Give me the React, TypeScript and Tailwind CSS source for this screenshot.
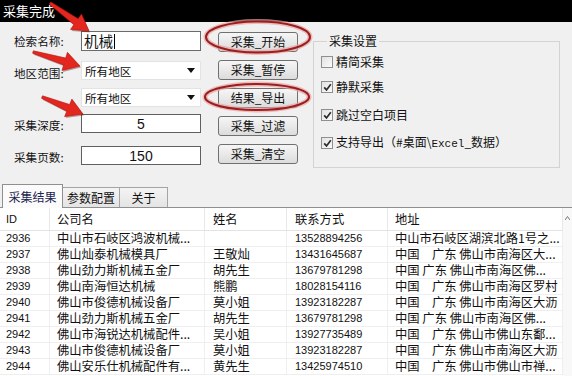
import React from "react";

function arrowPoints(x1: number, y1: number, x2: number, y2: number, tw = 1.3, sw = 3.6, hl = 16, hw = 9.5) {
  const dx = x2 - x1;
  const dy = y2 - y1;
  const L = Math.hypot(dx, dy);
  const ux = dx / L;
  const uy = dy / L;
  const nx = -uy;
  const ny = ux;
  const bx = x2 - ux * hl;
  const by = y2 - uy * hl;
  const pts = [
    [x1 + nx * tw, y1 + ny * tw],
    [bx + nx * sw, by + ny * sw],
    [bx + nx * hw, by + ny * hw],
    [x2, y2],
    [bx - nx * hw, by - ny * hw],
    [bx - nx * sw, by - ny * sw],
    [x1 - nx * tw, y1 - ny * tw],
  ];
  return pts.map((p) => p.map((v) => v.toFixed(1)).join(",")).join(" ");
}

const rows: [string, string, string, string, string][] = [
  ["2936", "中山市石岐区鸿波机械...", "", "13528894256", "中山市石岐区湖滨北路1号之..."],
  ["2937", "佛山灿泰机械模具厂", "王敬灿", "13431645687", "中国　广东 佛山市南海区大..."],
  ["2938", "佛山劲力斯机械五金厂", "胡先生", "13679781298", "中国 广东 佛山市南海区佛..."],
  ["2939", "佛山南海恒达机械", "熊鹏", "18028154116", "中国　广东 佛山市南海区罗村"],
  ["2940", "佛山市俊德机械设备厂", "莫小姐", "13923182287", "中国　广东 佛山市南海区大沥"],
  ["2941", "佛山劲力斯机械五金厂", "胡先生", "13679781298", "中国 广东 佛山市南海区佛..."],
  ["2942", "佛山市海锐达机械配件...", "吴小姐", "13927735489", "中国　广东 佛山市佛山东鄱..."],
  ["2943", "佛山市俊德机械设备厂", "莫小姐", "13923182287", "中国　广东 佛山市南海区大沥"],
  ["2944", "佛山安乐仕机械配件有...", "黄先生", "13425974510", "中国　广东 佛山市佛山市禅..."],
];

function Label({ children, className = "" }: { children: React.ReactNode; className?: string }) {
  return <div className={`w-[67px] shrink-0 text-[11.6px] leading-[16px] text-[#111] ${className}`}>{children}</div>;
}

function Btn({ children }: { children: React.ReactNode }) {
  return (
    <div className="flex h-[20px] w-[80px] items-center justify-center rounded-[3px] border border-[#707070] bg-gradient-to-b from-[#f6f6f6] to-[#dcdcdc] text-[12px] leading-[16px] text-[#111]">
      {children}
    </div>
  );
}

function Select({ children }: { children: React.ReactNode }) {
  return (
    <div className="flex h-[19px] w-[120px] items-center justify-between border border-[#e3e3e3] bg-white pl-[3px] pr-[5px] text-[11.6px] leading-[16px]">
      <span>{children}</span>
      <svg width="8" height="5" viewBox="0 0 8 5">
        <path d="M0 0 H8 L4 5 Z" fill="#111" />
      </svg>
    </div>
  );
}

function Check({ checked, children, className = "" }: { checked: boolean; children: React.ReactNode; className?: string }) {
  return (
    <div className={`flex h-[16px] items-center ${className}`}>
      <div className="flex h-[12px] w-[12px] items-center justify-center border border-[#8e8f8f] bg-gradient-to-br from-[#e2e2e2] to-[#fbfbfb]">
        {checked && (
          <svg width="9" height="9" viewBox="0 0 9 9">
            <path d="M1.2 4.4 L3.5 6.9 L7.8 1.3" fill="none" stroke="#2b2b2b" strokeWidth="1.7" />
          </svg>
        )}
      </div>
      <span className="ml-[3px] text-[12px] leading-[16px] text-[#111]">{children}</span>
    </div>
  );
}

export default function App() {
  const cols = "grid grid-cols-[50px_155px_82px_101px_175px]";
  return (
    <div className="relative h-[376px] w-[572px] overflow-hidden bg-[#f0f0f0] font-['Noto_Sans_CJK_SC',sans-serif] text-[#111]">
      {/* title bar */}
      <div className="flex h-[22px] items-center bg-black pl-[3px] text-[13px] leading-[16px] text-white">采集完成</div>

      {/* top section */}
      <div className="flex h-[162px]">
        <div className="ml-[14px] flex w-[187px] flex-col">
          <div className="mt-[9px] flex h-[20px] items-center">
            <Label>检索名称:</Label>
            <div className="flex h-[20px] w-[120px] items-center border border-[#6b6b6b] bg-white pl-[2px] text-[14.5px] leading-[18px]">
              机械
              <span className="ml-[1px] inline-block h-[15px] w-[1px] bg-black" />
            </div>
          </div>
          <div className="mt-[10px] flex">
            <Label className="pt-[4px]">地区范围:</Label>
            <div className="flex flex-col gap-[8px]">
              <Select>所有地区</Select>
              <Select>所有地区</Select>
            </div>
          </div>
          <div className="mt-[7px] flex h-[19px] items-center">
            <Label className="pt-[3px]">采集深度:</Label>
            <div className="flex h-[19px] w-[120px] items-center justify-center border border-[#5f5f5f] bg-white font-['Liberation_Sans'] text-[14px] leading-[16px]">5</div>
          </div>
          <div className="mt-[13px] flex h-[19px] items-center">
            <Label className="pt-[3px]">采集页数:</Label>
            <div className="flex h-[19px] w-[120px] items-center justify-center border border-[#5f5f5f] bg-white font-['Liberation_Sans'] text-[14px] leading-[16px]">150</div>
          </div>
        </div>

        <div className="ml-[17px] mt-[10px] flex w-[80px] flex-col gap-[8px]">
          <Btn>采集_开始</Btn>
          <Btn>采集_暂停</Btn>
          <Btn>结果_导出</Btn>
          <Btn>采集_过滤</Btn>
          <Btn>采集_清空</Btn>
        </div>

        <fieldset className="ml-[15px] mt-[11px] h-[135px] w-[247px] border border-[#d3d3d3] pl-[7px]">
          <legend className="ml-[6px] px-[2px] text-[12px] leading-[16px] text-[#111]">采集设置</legend>
          <Check checked={false} className="mt-[5px]">精简采集</Check>
          <Check checked className="mt-[9px]">静默采集</Check>
          <Check checked className="mt-[12px]">跳过空白项目</Check>
          <Check checked className="mt-[12px]">
            支持导出（#桌面\<span className="font-['Liberation_Mono'] text-[11px]">Excel</span>_数据）
          </Check>
        </fieldset>
      </div>

      {/* tabs */}
      <div className="flex h-[23px] items-end pl-[2px]">
        <div className="relative z-10 -mb-px flex h-[24px] w-[61px] items-center justify-center border border-b-0 border-[#8e8f8f] bg-[#fbfbfb] text-[12px] leading-[16px] text-[#1c2450]">
          采集结果
        </div>
        <div className="flex h-[20px] w-[57px] items-center justify-center border border-l-0 border-b-0 border-[#a4a4a4] bg-gradient-to-b from-[#f4f4f4] to-[#e4e4e4] text-[12px] leading-[16px]">
          参数配置
        </div>
        <div className="flex h-[20px] w-[48px] items-center justify-center border border-l-0 border-b-0 border-[#a4a4a4] bg-gradient-to-b from-[#f4f4f4] to-[#e4e4e4] text-[12px] leading-[16px]">
          关于
        </div>
      </div>

      {/* table */}
      <div className="flex h-[169px] border-t border-[#8e8f8f] bg-white">
        <div className="w-[563px]">
          <div className={`${cols} h-[23px] border-b border-[#e3e3e3] text-[12.3px] leading-[16px]`}>
            <div className="flex items-center border-r border-[#e8e8e8] pl-[6px] font-['Liberation_Sans'] text-[11px]">ID</div>
            <div className="flex items-center border-r border-[#e8e8e8] pl-[7px]">公司名</div>
            <div className="flex items-center border-r border-[#e8e8e8] pl-[8px]">姓名</div>
            <div className="flex items-center border-r border-[#e8e8e8] pl-[8px]">联系方式</div>
            <div className="flex items-center border-r border-[#e8e8e8] pl-[7px]">地址</div>
          </div>
          {rows.map((r) => (
            <div key={r[0]} className={`${cols} h-[16px] border-b border-[#efefef] text-[12.3px] leading-[15px]`}>
              <div className="flex items-center whitespace-nowrap border-r border-[#efefef] pl-[6px] font-['Liberation_Sans'] text-[11px]">{r[0]}</div>
              <div className="flex items-center whitespace-nowrap border-r border-[#efefef] pl-[7px]">{r[1]}</div>
              <div className="flex items-center whitespace-nowrap border-r border-[#efefef] pl-[8px]">{r[2]}</div>
              <div className="flex items-center whitespace-nowrap border-r border-[#efefef] pl-[8px] font-['Liberation_Sans'] text-[11px]">{r[3]}</div>
              <div className="flex items-center whitespace-pre border-r border-[#efefef] pl-[7px]">{r[4]}</div>
            </div>
          ))}
        </div>
        <div className="flex w-[9px] justify-center bg-[#f8f8f8] pt-[8px]">
          <svg width="5" height="4" viewBox="0 0 5 4">
            <path d="M0 4 L2.5 0.5 L5 4" fill="none" stroke="#777" strokeWidth="1" />
          </svg>
        </div>
      </div>

      {/* annotations */}
      <svg className="pointer-events-none absolute left-0 top-0" width="572" height="376" viewBox="0 0 572 376">
        <ellipse cx="258" cy="37" rx="52" ry="15.5" fill="none" stroke="#e9a3a3" strokeOpacity="0.7" strokeWidth="5" />
        <ellipse cx="258" cy="37" rx="52" ry="15.5" fill="none" stroke="#9b1e1e" strokeWidth="2" />
        <ellipse cx="257" cy="97" rx="52" ry="13" fill="none" stroke="#e9a3a3" strokeOpacity="0.7" strokeWidth="5" />
        <ellipse cx="257" cy="97" rx="52" ry="13" fill="none" stroke="#9b1e1e" strokeWidth="2" />
        {[
          [50, 3, 89, 31],
          [33, 52, 80, 66],
          [42, 97, 83, 114],
        ].map(([a, b, c, d], i) => (
          <g key={i}>
            <polygon points={arrowPoints(a + 1, b + 1.5, c + 1, d + 1.5)} fill="#5a0000" opacity="0.35" />
            <polygon points={arrowPoints(a, b, c, d)} fill="#e3261e" stroke="#b3140f" strokeWidth="0.6" />
          </g>
        ))}
      </svg>
    </div>
  );
}
